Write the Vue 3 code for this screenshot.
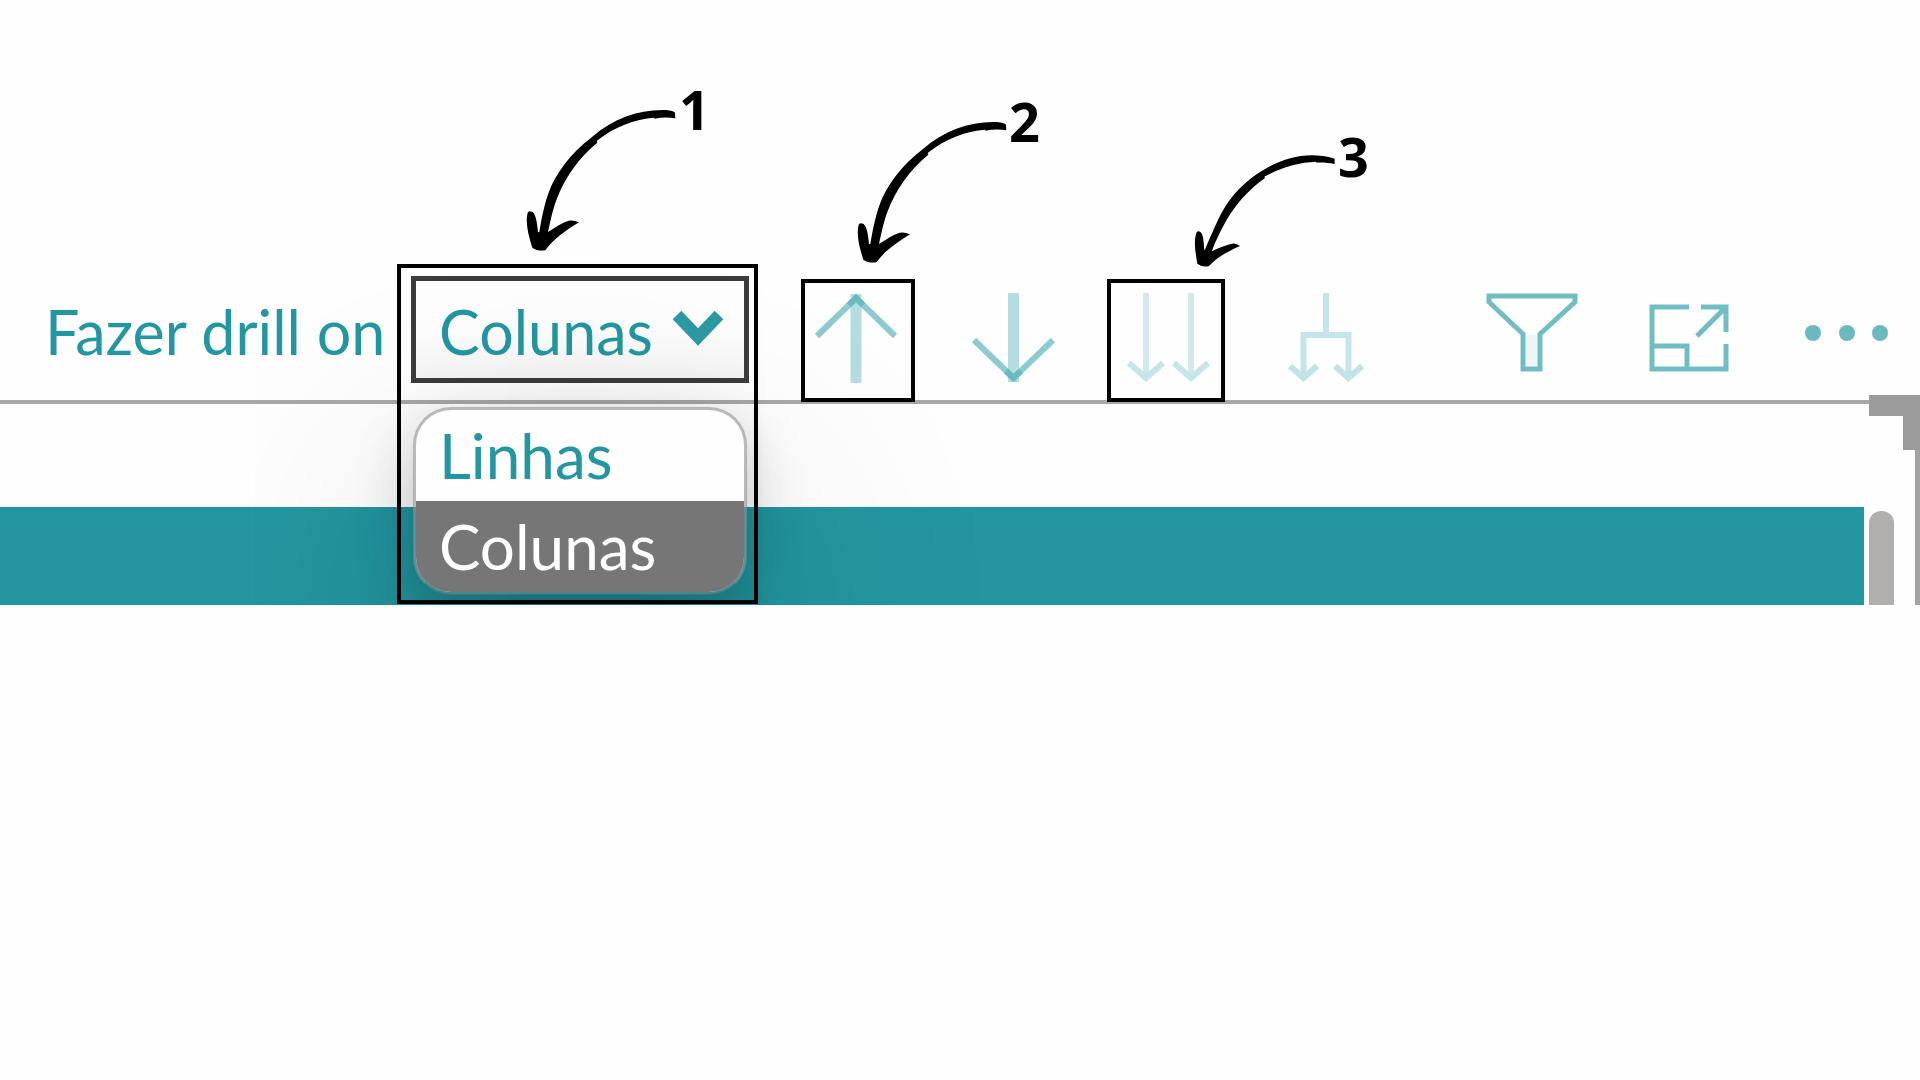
<script setup>
import { ref } from 'vue'

const axis = ref('Colunas')
const options = ['Linhas', 'Colunas']

const sweep =
  'M526 145 L525 128 Q520 122 498 120 C420 117 340 145 277 200 C210 250 165 315 147 365 C132 405 124 450 118 486 L114 487 C112 465 109 436 98 426 Q86 420 83 428 C76 455 83 490 97 533 Q112 544 136 541 C152 521 170 498 237 457 Q220 449 206 452 C185 459 165 472 144 486 C150 460 157 422 170 388 C195 322 235 265 292 218 L290 213 C340 172 405 146 463 143 L463 146 C485 142 508 142 526 145 Z'
const shortSweep =
  'M494 162 L494 146 C470 139 448 136 425 136 C360 137 300 163 245 203 C190 245 158 296 137 345 C123 377 112 400 104 422 C100 401 102 376 92 367 Q84 361 80 367 C70 392 76 425 82 461 Q95 472 116 469 C136 448 160 430 210 408 Q200 398 185 401 C165 407 145 414 125 424 C136 396 152 361 171 328 C199 281 235 240 285 204 L283 200 C330 173 385 157 438 155 L440 158 C460 157 475 159 494 162 Z'
</script>

<template>
  <main class="capture">
    <div class="toolbar">
      <label class="caption" for="axis">Fazer drill on</label>

      <div class="picker">
        <select id="axis" v-model="axis">
          <option v-for="o in options" :key="o">{{ o }}</option>
        </select>
        <svg class="chevron" viewBox="671 306 54 44" aria-hidden="true">
          <path d="M677 315 698 337 719 315" fill="none" stroke="#2c9aa4" stroke-width="12" />
        </svg>
        <ul class="menu" role="listbox" aria-label="Fazer drill on">
          <li
            v-for="o in options"
            :key="o"
            role="option"
            :aria-selected="o === axis"
            :class="{ selected: o === axis }"
            @click="axis = o"
          >{{ o }}</li>
        </ul>
        <span class="frame frame-picker"></span>
        <svg class="arrow arrow-one" viewBox="78 117 450 429" aria-hidden="true"><path :d="sweep" /></svg>
        <b class="mark mark-one">1</b>
      </div>

      <div class="tools drill">
        <div class="tool">
          <button type="button" aria-label="Drill up">
            <svg width="114" height="122" viewBox="801 279 114 122">
              <path d="M856 294V383" stroke="#b3dde0" stroke-width="11" />
              <path d="M817 336 856 298 895 336" stroke="#8ccbd0" stroke-width="6" />
              <path d="M849 305 856 298 863 305" stroke="#69b9c1" stroke-width="6" />
            </svg>
          </button>
          <span class="frame"></span>
          <svg class="arrow arrow-two" viewBox="78 117 450 429" aria-hidden="true"><path :d="sweep" /></svg>
          <b class="mark mark-two">2</b>
        </div>
        <div class="tool">
          <button type="button" aria-label="Drill down">
            <svg width="112" height="122" viewBox="955 279 112 122">
              <path d="M1013.5 293V382" stroke="#b3dde0" stroke-width="11" />
              <path d="M974 340 1013.5 378 1053 340" stroke="#8ccbd0" stroke-width="6" />
              <path d="M1006 371 1013.5 378 1021 371" stroke="#69b9c1" stroke-width="6" />
            </svg>
          </button>
        </div>
        <div class="tool">
          <button type="button" aria-label="Next level">
            <svg width="118" height="122" viewBox="1107 279 118 122">
              <path d="M1146 293V379M1191 293V379" stroke="#d0eaec" stroke-width="6" />
              <path d="M1129 363 1146 378 1163 363M1174 363 1191 378 1208 363" stroke="#c5e5e8" stroke-width="6" />
            </svg>
          </button>
          <span class="frame"></span>
          <svg class="arrow arrow-three" viewBox="72 135 423 336" aria-hidden="true"><path :d="shortSweep" /></svg>
          <b class="mark mark-three">3</b>
        </div>
        <div class="tool">
          <button type="button" aria-label="Expand all">
            <svg width="122" height="122" viewBox="1265 279 122 122">
              <path d="M1326 293V334M1303.5 378V335H1348.5V378" stroke="#c6e5e8" stroke-width="6" />
              <path d="M1290 366 1303.5 378 1317 366M1335 366 1348.5 378 1362 366" stroke="#c0e3e6" stroke-width="6" />
            </svg>
          </button>
        </div>
      </div>

      <div class="tools actions">
        <button type="button" aria-label="Filter">
          <svg width="92" height="122" viewBox="1486 279 92 122">
            <path d="M1524 335H1539V366H1524Z" fill="#ecf5f7" />
            <path d="M1489 296H1575V302L1540 334V369H1523V334L1489 302Z" stroke="#71bdc4" stroke-width="5" />
          </svg>
        </button>
        <button type="button" aria-label="Focus mode">
          <svg width="86" height="122" viewBox="1648 279 86 122">
            <path d="M1689 307H1652V369H1726V344M1652 346H1687V369M1701 307H1726V332M1697 336 1725 308" stroke="#71bdc4" stroke-width="5" />
          </svg>
        </button>
        <button type="button" aria-label="More options">
          <svg width="86" height="122" viewBox="1804 279 86 122">
            <circle cx="1813" cy="333" r="8" />
            <circle cx="1847" cy="333" r="8" />
            <circle cx="1880" cy="333" r="8" />
          </svg>
        </button>
      </div>
    </div>

    <div class="body">
      <div class="band"></div>
      <div class="thumb"></div>
    </div>
    <div class="edge"></div>
  </main>
</template>

<style>
body {
  background: #fefefe;
}
</style>

<style scoped>
.capture {
  position: relative;
  overflow: hidden;
  font-family: Lato, "Open Sans", sans-serif;
  color: #2297a1;
}

.toolbar {
  display: flex;
  align-items: flex-start;
  padding: 276px 30px 0 45px;
  border-bottom: 4px solid #a8a8a8;
}

.caption {
  flex: 0 0 366px;
  font-size: 61px;
  line-height: 112px;
  white-space: nowrap;
}

.picker {
  position: relative;
  z-index: 1;
  flex: 0 0 338px;
  height: 107px;
  margin-right: 52px;
}

select {
  appearance: none;
  box-sizing: border-box;
  width: 100%;
  height: 100%;
  margin: 0;
  padding: 4px 23px 0;
  border: 5px solid #3c3c3c;
  border-radius: 0;
  outline: none;
  background: linear-gradient(#fefefe 50%, #f5f5f5);
  color: inherit;
  font: 61px Lato, "Open Sans", sans-serif;
}

.chevron {
  position: absolute;
  top: 30px;
  right: 24px;
  width: 54px;
  height: 44px;
  pointer-events: none;
}

.menu {
  position: absolute;
  top: 131px;
  left: 2px;
  right: 2px;
  margin: 0;
  padding: 0;
  list-style: none;
  overflow: hidden;
  border: 3px solid rgba(140, 140, 140, 0.6);
  border-bottom-color: rgba(118, 118, 118, 0.4);
  border-radius: 38px;
  background: #fefefe;
  background-clip: padding-box;
  box-shadow: 0 100px 240px rgba(0, 0, 0, 0.26), 0 20px 60px rgba(0, 0, 0, 0.2);
}

.menu li {
  padding-left: 23px;
  font-size: 62px;
  line-height: 91px;
}

.menu .selected {
  background: #767676;
  color: #fff;
}

.frame {
  position: absolute;
  inset: 0 0 -1px;
  border: 4px solid #000;
  pointer-events: none;
}

.frame-picker {
  inset: -12px -9px -221px -14px;
}

.tools {
  display: flex;
  margin-bottom: -1px;
}

.drill {
  gap: 40px;
}

.actions {
  gap: 70px;
  margin-left: auto;
}

.tools button {
  display: block;
  margin: 3px 0 0;
  padding: 0;
  border: 0;
  background: none;
}

.tools svg {
  display: block;
  fill: none;
}

.tools circle {
  fill: #6bb9bf;
}

.tool {
  position: relative;
}

.tool .frame {
  top: 3px;
}

.arrow {
  position: absolute;
  width: 150px;
  height: 143px;
  pointer-events: none;
}

.arrow path {
  fill: #000;
}

.arrow-one {
  top: -167px;
  left: 115px;
}

.arrow-two {
  top: -155px;
  left: 56px;
}

.arrow-three {
  top: -121px;
  left: 87px;
  width: 141px;
  height: 112px;
}

.mark {
  position: absolute;
  color: #000;
  font: bold 54px/54px "Open Sans", sans-serif;
}

.mark-one {
  top: -194px;
  left: 268px;
}

.mark-two {
  top: -182px;
  left: 208px;
}

.mark-three {
  top: -147px;
  left: 231px;
}

.body {
  display: flex;
  align-items: flex-end;
  padding: 103px 26px 0 0;
}

.band {
  flex: 1;
  height: 98px;
  background: #2297a1;
}

.thumb {
  width: 25px;
  height: 94px;
  margin-left: 5px;
  border-radius: 12px 12px 0 0;
  background: #b0afad;
}

.edge {
  position: absolute;
  top: 395px;
  right: 0;
  bottom: 0;
  width: 5px;
  background: #a3a3a3;
}

.edge::before,
.edge::after {
  content: "";
  position: absolute;
  top: 0;
  right: 0;
  width: 51px;
  height: 21px;
  background: #9b9b9b;
}

.edge::after {
  width: 17px;
  height: 55px;
}
</style>
